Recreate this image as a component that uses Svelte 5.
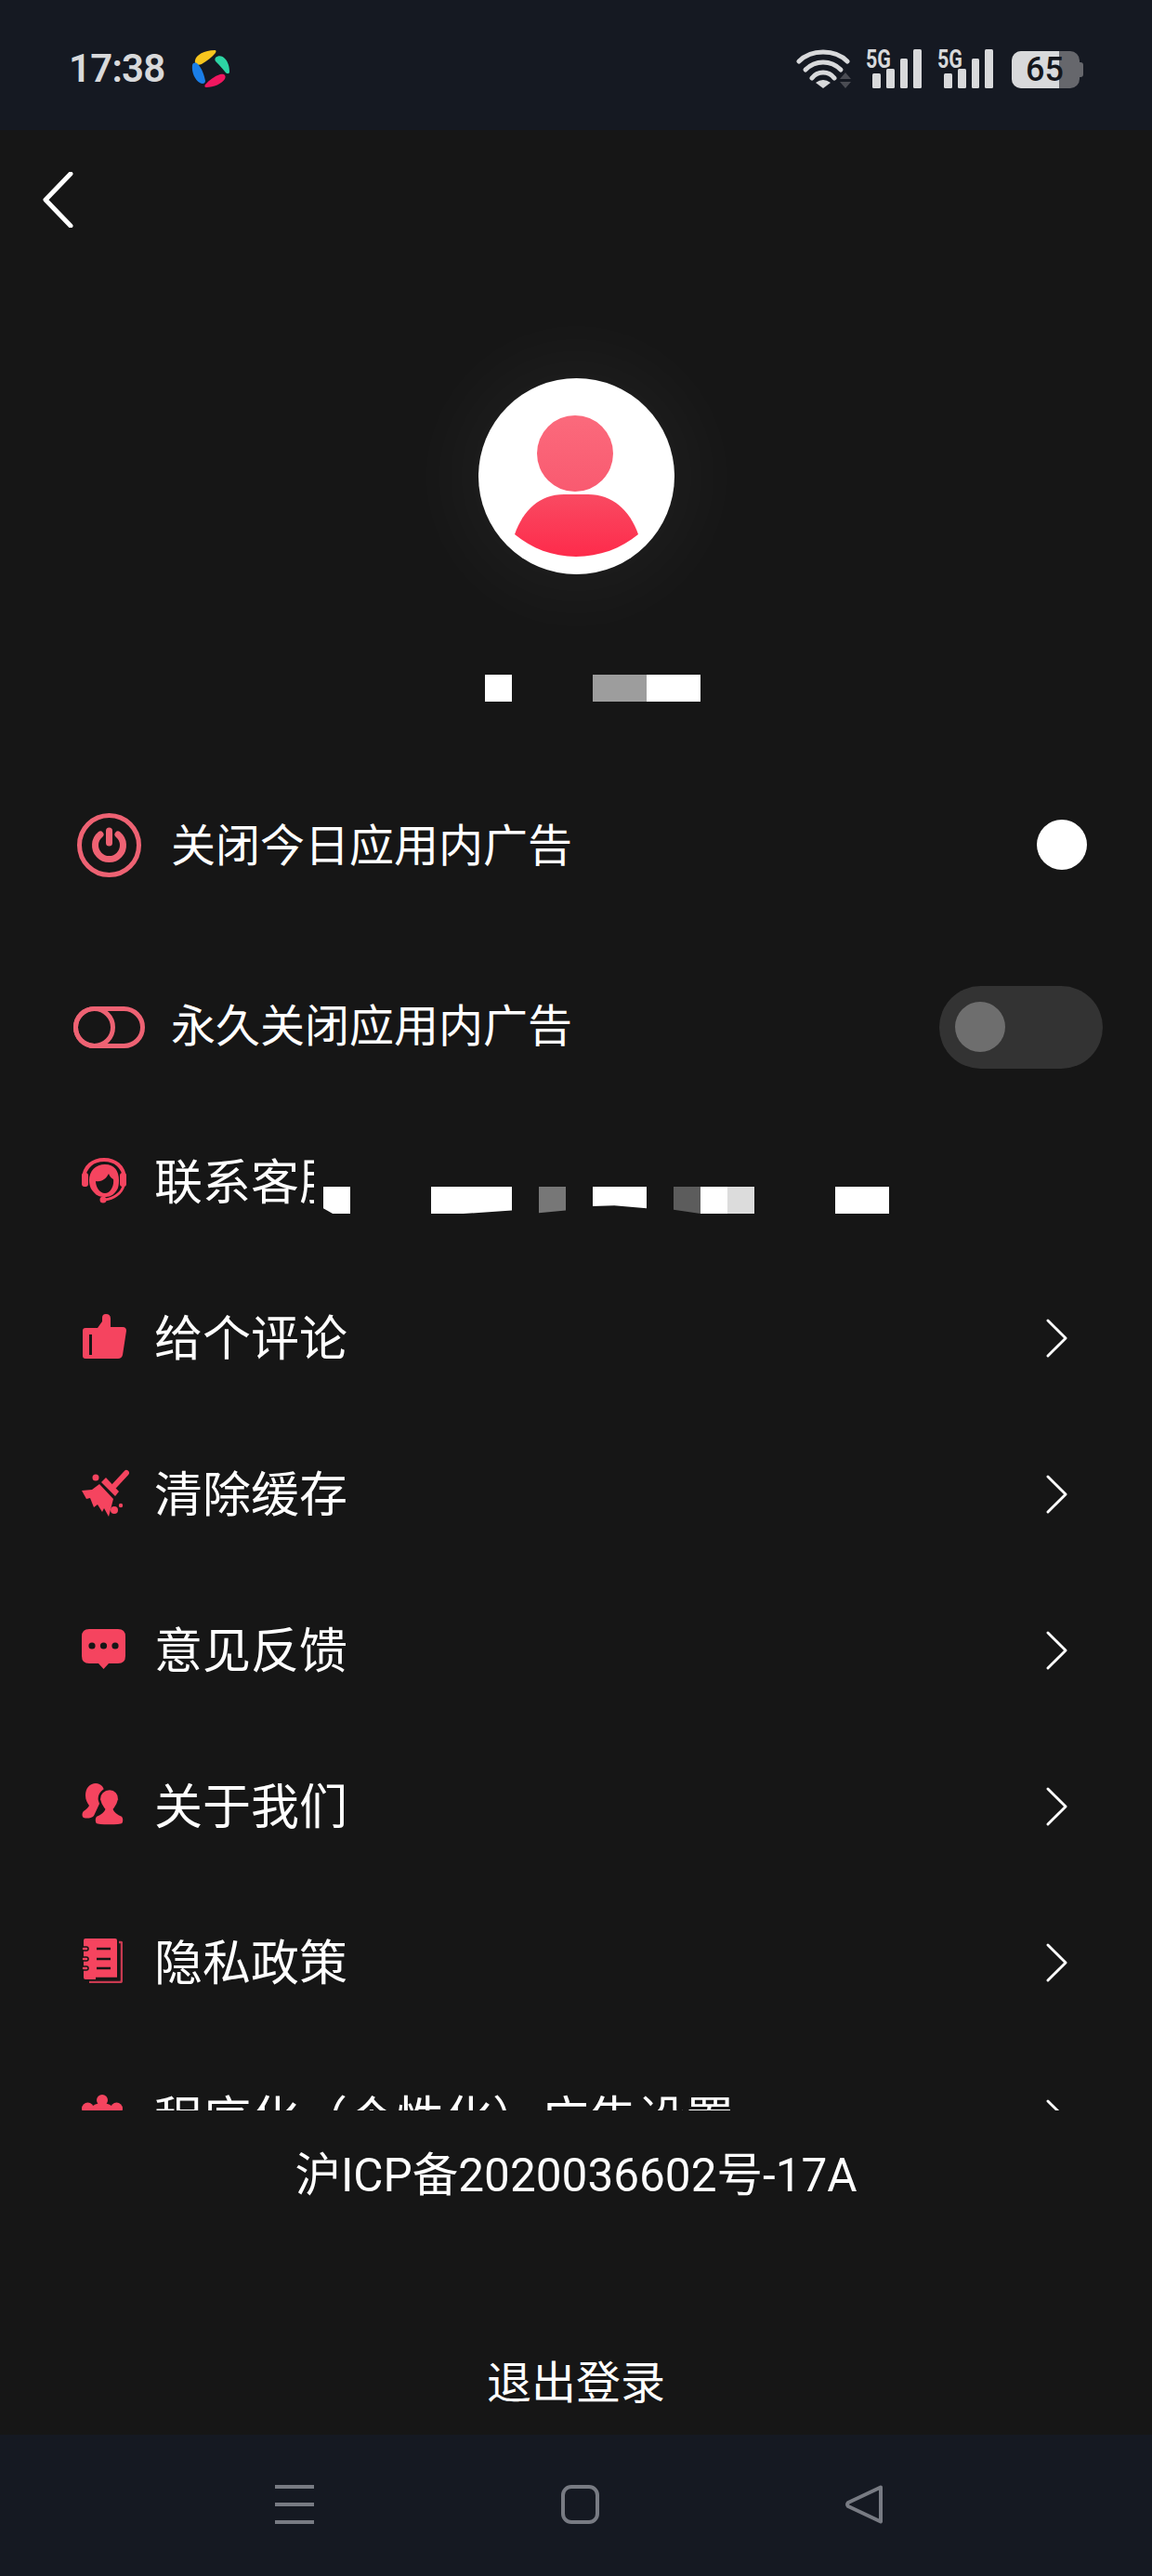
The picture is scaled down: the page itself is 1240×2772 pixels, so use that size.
<script>
  const menu = [
    { key: 'service', label: '联系客服' },
    { key: 'rate', label: '给个评论' },
    { key: 'clean', label: '清除缓存' },
    { key: 'feedback', label: '意见反馈' },
    { key: 'about', label: '关于我们' },
    { key: 'privacy', label: '隐私政策' },
    { key: 'ads', label: '程序化（个性化）广告设置' }
  ];
</script>

{#snippet signal()}
  <svg class="signal" width="60" height="44" viewBox="0 0 60 44">
    <text x="0" y="21" textLength="27" lengthAdjust="spacingAndGlyphs">5G</text>
    <rect x="7" y="27" width="9" height="16" rx="1.5" />
    <rect x="22" y="22" width="9" height="21" rx="1.5" />
    <rect x="37" y="11" width="8" height="32" rx="1.5" />
    <rect x="51" y="1" width="9" height="42" rx="1.5" />
  </svg>
{/snippet}

{#snippet menuIcon(key)}
  {#if key === 'service'}
    <svg class="icon" width="49" height="49" viewBox="0 0 49 49">
      <path class="redband" d="M2 22C3 9 12 2 24 2S45 9 46 22" />
      <path d="M8 24C8 14 15 7 25 7S40 14 40 24C40 30 39 34 36 37C33 41 29 42 25 42C20 42 16 41 13 37C10 34 8 30 8 24Z" />
      <path class="hole" d="M15 25C21 26 26 23 29 17C30 20 32 22 34 23C35 30 31 38 25 38C19 38 15 31 15 25Z" />
      <rect x="0" y="16" width="7" height="15" rx="3" />
      <rect x="41" y="16" width="7" height="15" rx="3" />
      <path class="redline" d="M45 30C43 38 34 44 25 45" />
      <circle cx="23" cy="45" r="3.500" />
    </svg>
  {:else if key === 'rate'}
    <svg class="icon" width="48" height="48" viewBox="0 0 48 48">
      <path d="M4 15H17L22 8V4Q22 0 26 0Q31 0 31 5V14H44Q48 14 48 18L44 44Q43 48 39 48H4Q1 48 1 45V18Q1 15 4 15Z" />
      <rect class="hole" x="8" y="22" width="3" height="22" />
    </svg>
  {:else if key === 'clean'}
    <svg class="icon" width="51" height="51" viewBox="0 0 51 51">
      <path class="redthick" d="M48 4L35 18" />
      <circle cx="15" cy="9" r="3.500" />
      <path d="M26 9L40 24L36 29L21 14Z" />
      <path d="M19 16L34 32L29 51L24 42L22 46L17 38L13 41L9 31L5 32L0 23L11 22Z" />
      <circle cx="35" cy="44" r="4" />
      <circle cx="42" cy="39" r="2.200" />
    </svg>
  {:else if key === 'feedback'}
    <svg class="icon" width="47" height="43" viewBox="0 0 47 43">
      <path d="M8 0H39Q47 0 47 8V29Q47 37 39 37H29L23.500 43L18 37H8Q0 37 0 29V8Q0 0 8 0Z" />
      <circle class="hole" cx="11" cy="18" r="3.600" />
      <circle class="hole" cx="23.500" cy="18" r="3.600" />
      <circle class="hole" cx="36" cy="18" r="3.600" />
    </svg>
  {:else if key === 'about'}
    <svg class="icon" width="46" height="46" viewBox="0 0 46 46">
      <path d="M15 0c6 0 10 5 9 11-1 5-3 8-5 11l-6 13c-3 3-8 3-11 2-2-1-2-5 0-7 3-2 5-4 6-6-2-3-4-6-4-11C4 5 9 0 15 0z" />
      <path class="edge" d="M30 6c6 0 11 5 10 12-1 5-3 7-5 10 1 3 5 5 9 7 2 2 2 7 0 9-3 2-26 2-29 0-2-2-2-7 0-9 4-2 8-4 9-7-2-3-4-5-5-10-1-7 5-12 11-12z" />
    </svg>
  {:else if key === 'privacy'}
    <svg class="icon" width="44" height="48" viewBox="0 0 44 48">
      <path class="back" d="M40 4H42Q43 4 43 5V45Q43 47 41 47H8" />
      <rect x="2" y="0" width="36" height="44" rx="2" />
      <g class="lines">
        <path d="M16 11H31M16 22H31M16 32H31M15 43H38" />
      </g>
      <g class="rings">
        <rect x="0" y="9" width="7" height="4" rx="2" />
        <rect x="0" y="20" width="7" height="4" rx="2" />
        <rect x="0" y="30" width="7" height="4" rx="2" />
      </g>
    </svg>
  {:else}
    <svg class="icon" width="44" height="48" viewBox="0 0 44 48">
      <circle cx="22" cy="28" r="19" />
      <circle cx="22" cy="6" r="6" />
      <circle cx="6.500" cy="15" r="6.500" />
      <circle cx="37.500" cy="15" r="6.500" />
      <circle cx="6.500" cy="36" r="6.500" />
      <circle cx="37.500" cy="36" r="6.500" />
    </svg>
  {/if}
{/snippet}

<div class="phone">
  <header class="status">
    <div class="status-left">
      <span class="time">17:38</span>
      <svg width="41" height="42" viewBox="0 0 41 42">
        <path fill="#f7c51e" d="M4 12C5 6 14 1 25 1C27 1 27 3 25 5C22 9 17 12 11 16C7 18 3 16 4 12Z" />
        <path fill="#2dd4a4" d="M26 9C29 6 34 7 36 10C40 14 41 20 41 24C41 27 38 27 36 24C33 20 30 17 27 14C25 12 25 11 26 9Z" />
        <path fill="#f0175f" d="M15 38C19 33 25 29 31 27C35 26 38 28 36 32C33 37 24 41 16 41C14 41 14 39 15 38Z" />
        <path fill="#1a7ee8" d="M1 17C2 14 5 14 7 16C11 20 14 28 15 34C15 37 12 38 9 36C4 33 0 25 1 17Z" />
      </svg>
    </div>
    <div class="status-right">
      <svg class="wifi" width="60" height="44" viewBox="0 0 60 44">
        <g class="arcs">
          <path d="M3 14C10 7 19 4 29 4S48 7 55 14" />
          <path d="M10 23C15 18 22 15 29 15S43 18 48 23" />
          <path d="M17 32C20 28 24 26 29 26S38 28 41 32" />
        </g>
        <path class="wedge" d="M21 37Q29 31 37 37L29 43Z" />
        <path class="updown" d="M53 26L59 33H47ZM53 43L47 36H59Z" />
      </svg>
      {@render signal()}
      {@render signal()}
      <div class="battery">
        <div class="battery-level"></div>
        <span>65</span>
      </div>
    </div>
  </header>

  <main class="page">
    <div class="topbar">
      <svg width="34" height="60" viewBox="0 0 34 60">
        <path d="M31 2L4 30L31 58" />
      </svg>
    </div>

    <div class="avatar">
      <svg width="211" height="211" viewBox="0 0 211 211">
        <defs>
          <linearGradient id="head" x1="0" y1="0" x2="0" y2="1">
            <stop offset="0" stop-color="#fb6a7c" />
            <stop offset="1" stop-color="#f95a70" />
          </linearGradient>
          <linearGradient id="chest" x1="0" y1="0" x2="0" y2="1">
            <stop offset="0" stop-color="#f94a62" />
            <stop offset="1" stop-color="#fe2b4b" />
          </linearGradient>
        </defs>
        <circle cx="104" cy="81" r="41" fill="url(#head)" />
        <path fill="url(#chest)" d="M39 168C48 142 66 125 92 125H118C144 125 163 142 172 168C154 183 130 192 105 192C80 192 57 183 39 168Z" />
      </svg>
    </div>

    <div class="name">
      <i class="white small"></i>
      <i class="grey"></i>
      <i class="white"></i>
    </div>

    <div class="ad-rows">
      <div class="ad-row">
        <span class="ad-icon">
          <svg width="69" height="69" viewBox="0 0 69 69">
            <circle cx="34.500" cy="34.500" r="32" />
            <path class="thick" d="M25 23A15 15 0 1 0 44 23" />
            <path class="thick" d="M34.500 19V32" />
          </svg>
        </span>
        <span class="label first">关闭今日应用内广告</span>
        <span class="dot"></span>
      </div>
      <div class="ad-row">
        <span class="ad-icon">
          <svg width="77" height="45" viewBox="0 0 77 45">
            <rect x="2.500" y="2.500" width="72" height="40" rx="20" />
            <circle cx="22.500" cy="22.500" r="20" />
          </svg>
        </span>
        <span class="label">永久关闭应用内广告</span>
        <span class="switch"><span class="knob"></span></span>
      </div>
    </div>

    <div class="menu">
      {#each menu as item}
        <div class="row">
          <span class="row-icon">{@render menuIcon(item.key)}</span>
          {#if item.key === 'service'}
            <span class="row-label cutoff">{item.label}</span>
            <i class="mask m1"></i>
            <i class="mask m2"></i>
            <i class="mask m3"></i>
            <i class="mask m4"></i>
            <i class="mask m5"></i>
            <i class="mask m6"></i>
            <i class="mask m7"></i>
            <i class="mask m8"></i>
          {:else}
            <span class="row-label">{item.label}</span>
            <svg class="chevron" width="26" height="44" viewBox="0 0 26 44">
              <path d="M3 2L23 22L3 42" />
            </svg>
          {/if}
        </div>
      {/each}
    </div>

    <div class="icp">沪ICP备2020036602号-17A</div>
    <div class="logout">退出登录</div>
  </main>

  <nav class="navbar">
    <div class="nav-menu"><i></i><i></i><i></i></div>
    <div class="nav-home"></div>
    <svg class="nav-back" width="41" height="42" viewBox="0 0 41 42">
      <path d="M38 2.500L3 19Q1 21 3 23L38 39.500Z" />
    </svg>
  </nav>
</div>

<style>
  :global(body) {
    margin: 0;
    background: #161616;
  }

  .phone {
    width: 1240px;
    height: 2772px;
    display: flex;
    flex-direction: column;
    color: #fff;
    font-family: Roboto, "Noto Sans CJK SC", sans-serif;
    overflow: hidden;
  }

  /* status bar */
  .status {
    height: 140px;
    box-sizing: border-box;
    padding: 53px 74px 0 74px;
    background: #151922;
    display: flex;
    justify-content: space-between;
    align-items: flex-start;
  }

  .status-left {
    display: flex;
    align-items: center;
    gap: 30px;
  }

  .time {
    width: 102px;
    font-size: 42px;
    line-height: 42px;
    font-weight: 600;
    letter-spacing: -0.8px;
    color: #d8d9db;
  }

  .status-right {
    display: flex;
    align-items: flex-start;
    gap: 17px;
    margin-top: -1px;
  }

  .wifi {
    margin-right: -2px;
  }

  .arcs path {
    fill: none;
    stroke: #d8d9db;
    stroke-width: 5;
    stroke-linecap: round;
  }

  .wedge {
    fill: #d8d9db;
  }

  .updown {
    fill: #4a4c53;
  }

  .signal {
    overflow: visible;
  }

  .signal text {
    font-family: Roboto, sans-serif;
    font-weight: 700;
    font-size: 27px;
    fill: #d8d9db;
  }

  .signal rect {
    fill: #d8d9db;
  }

  .battery {
    position: relative;
    width: 73px;
    height: 40px;
    margin: 3px 4px 0 3px;
    border-radius: 10px;
    background: #66676c;
  }

  .battery::after {
    content: "";
    position: absolute;
    right: -4px;
    top: 12px;
    width: 4px;
    height: 16px;
    border-radius: 0 3px 3px 0;
    background: #66676c;
  }

  .battery-level {
    width: 51px;
    height: 40px;
    border-radius: 10px 0 0 10px;
    background: #d8d9db;
  }

  .battery span {
    position: absolute;
    left: 15px;
    top: 0;
    font-size: 36px;
    line-height: 40px;
    font-weight: 500;
    color: #15171d;
  }

  /* page */
  .page {
    height: 2480px;
    background: #161616;
    display: flex;
    flex-direction: column;
  }

  .topbar {
    padding: 45px 0 0 45px;
    height: 60px;
  }

  .topbar svg {
    display: block;
  }

  .topbar path {
    fill: none;
    stroke: #fff;
    stroke-width: 5;
    stroke-linecap: round;
    stroke-linejoin: round;
  }

  .avatar {
    width: 211px;
    height: 211px;
    margin: 162px auto 0;
    border-radius: 50%;
    background: #fff;
    box-shadow: 0 0 90px 25px rgba(255, 255, 255, 0.04);
  }

  .avatar svg {
    display: block;
  }

  .name {
    display: flex;
    margin-top: 108px;
    padding-left: 522px;
    height: 29px;
  }

  .name i {
    display: block;
    width: 58px;
    height: 29px;
  }

  .name .small {
    width: 29px;
    margin-right: 87px;
  }

  .name .white {
    background: #fff;
  }

  .name .grey {
    background: #9d9d9d;
  }

  .ad-rows {
    display: flex;
    flex-direction: column;
    gap: 26px;
    margin-top: 69px;
  }

  .ad-row {
    height: 170px;
    display: flex;
    align-items: center;
  }

  .ad-icon {
    width: 78px;
    margin-left: 78px;
    margin-right: 28px;
    display: flex;
    justify-content: center;
  }

  .ad-icon svg {
    display: block;
    overflow: visible;
  }

  .ad-icon circle,
  .ad-icon rect,
  .ad-icon path {
    fill: none;
    stroke: #ee6273;
    stroke-width: 5;
  }

  .ad-icon .thick {
    stroke-width: 7;
    stroke-linecap: round;
  }

  .label {
    font-size: 48px;
    line-height: 60px;
    flex: 1;
    font-weight: 400;
  }

  .label.first {
    padding-top: 4px;
  }

  .dot {
    width: 54px;
    height: 54px;
    margin-right: 70px;
    border-radius: 50%;
    background: #fff;
  }

  .switch {
    width: 176px;
    height: 89px;
    margin-right: 53px;
    border-radius: 45px;
    background: #333333;
    display: flex;
    align-items: center;
    padding-left: 17px;
    box-sizing: border-box;
  }

  .knob {
    width: 54px;
    height: 54px;
    border-radius: 50%;
    background: #6e6e6e;
  }

  /* menu, cut off by its scroll area */
  .menu {
    height: 1081px;
    overflow: hidden;
  }

  .row {
    height: 168px;
    display: flex;
    align-items: center;
    position: relative;
    padding-left: 88px;
  }

  .row-icon {
    width: 78px;
    display: flex;
    margin-bottom: 8px;
  }

  .icon {
    display: block;
    fill: #f5445f;
  }

  .icon .hole {
    fill: #161616;
  }

  .icon .redband {
    fill: none;
    stroke: #f5445f;
    stroke-width: 4;
  }

  .icon .redline {
    fill: none;
    stroke: #f5445f;
    stroke-width: 3;
  }

  .icon .redthick {
    fill: none;
    stroke: #f5445f;
    stroke-width: 6;
    stroke-linecap: round;
  }

  .icon .edge {
    stroke: #161616;
    stroke-width: 2.500;
  }

  .icon .back {
    fill: none;
    stroke: #c83a50;
    stroke-width: 2.500;
  }

  .icon .lines path {
    fill: none;
    stroke: #161616;
    stroke-width: 2.500;
  }

  .icon .rings rect {
    fill: #f5445f;
    stroke: #161616;
    stroke-width: 1.500;
  }

  .row-label {
    font-size: 52px;
    line-height: 70px;
    font-weight: 400;
    white-space: nowrap;
    flex: 1;
  }

  .cutoff {
    flex: none;
    width: 172px;
    overflow: hidden;
  }

  .chevron {
    margin-right: 90px;
    margin-bottom: 4px;
    width: 25px;
    height: 42px;
  }

  .chevron path {
    fill: none;
    stroke: #fff;
    stroke-width: 3;
    stroke-linecap: round;
    stroke-linejoin: round;
  }

  .mask {
    position: absolute;
    top: 87px;
    height: 29px;
    background: #fff;
  }

  .m1 { left: 348px; width: 29px; clip-path: polygon(0 0, 100% 0, 100% 100%, 35% 100%, 0 80%); }
  .m2 { left: 464px; width: 87px; clip-path: polygon(0 0, 100% 0, 100% 88%, 40% 100%, 0 100%); }
  .m3 { left: 580px; width: 29px; background: #777; clip-path: polygon(0 0, 100% 0, 100% 88%, 0 97%); }
  .m4 { left: 638px; width: 58px; clip-path: polygon(0 0, 100% 0, 100% 80%, 40% 70%, 0 72%); }
  .m5 { left: 725px; width: 29px; background: #5c5c5c; clip-path: polygon(0 0, 100% 0, 100% 100%, 0 85%); }
  .m6 { left: 754px; width: 29px; }
  .m7 { left: 783px; width: 29px; background: #dcdcdc; }
  .m8 { left: 899px; width: 58px; }

  .icp {
    margin-top: 35px;
    font-size: 49.5px;
    line-height: 70px;
    text-align: center;
    font-weight: 400;
  }

  .logout {
    margin-top: 154px;
    font-size: 48px;
    line-height: 70px;
    text-align: center;
    font-weight: 400;
  }

  /* bottom nav */
  .navbar {
    height: 152px;
    box-sizing: border-box;
    padding: 54px 0 0 296px;
    background: #151922;
    display: flex;
    align-items: flex-start;
  }

  .nav-menu {
    width: 42px;
    height: 42px;
    display: flex;
    flex-direction: column;
    justify-content: space-between;
    margin-right: 266px;
  }

  .nav-menu i {
    display: block;
    height: 4px;
    background: #787b83;
  }

  .nav-home {
    width: 41px;
    height: 42px;
    box-sizing: border-box;
    border: 4px solid #787b83;
    border-radius: 11px;
    margin-right: 265px;
  }

  .nav-back path {
    fill: none;
    stroke: #787b83;
    stroke-width: 4;
    stroke-linejoin: round;
  }
</style>
